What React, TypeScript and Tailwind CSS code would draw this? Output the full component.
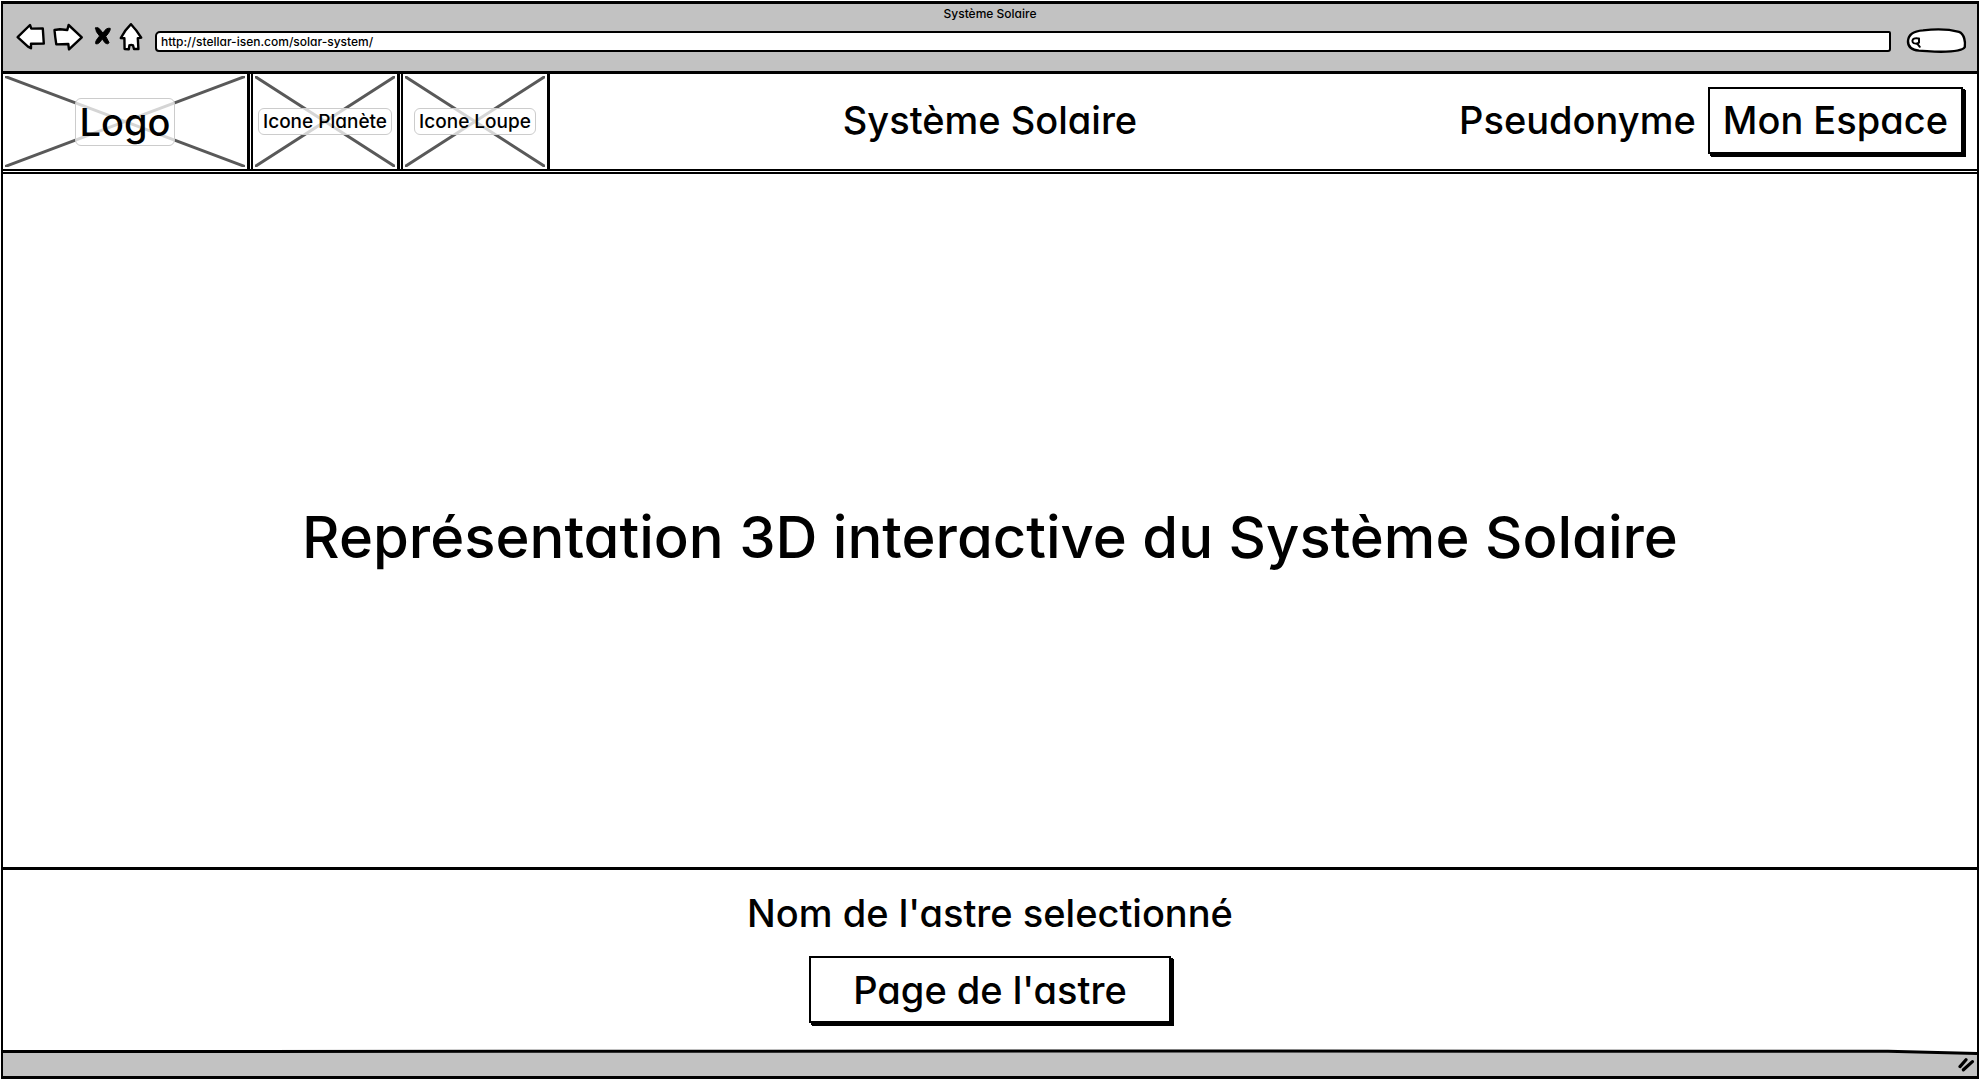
import React from "react";

type PlaceholderProps = { label: string; className: string; labelClassName: string };

function Placeholder({ label, className, labelClassName }: PlaceholderProps) {
  return (
    <a
      href="#"
      className={`relative flex items-center justify-center border-r-[3px] border-black ${className}`}
    >
      <svg
        className="absolute inset-0 h-full w-full p-[2px]"
        viewBox="0 0 100 100"
        preserveAspectRatio="none"
        aria-hidden="true"
      >
        <path
          d="M0.5 1 L99.5 99 M0.5 99 L99.5 1"
          stroke="#595959"
          strokeWidth="3"
          strokeLinecap="round"
          vectorEffect="non-scaling-stroke"
          fill="none"
        />
      </svg>
      <span
        className={`relative rounded-md border border-[#cccccc] bg-white/75 whitespace-nowrap ${labelClassName}`}
      >
        {label}
      </span>
    </a>
  );
}

type NavIconProps = { title: string; width: number; x: number; children: React.ReactNode };

function NavIcon({ title, width, x, children }: NavIconProps) {
  return (
    <button type="button" aria-label={title} className="shrink-0">
      <svg
        width={width}
        height={30}
        viewBox={`${x} 24 ${width} 30`}
        className="overflow-visible"
        fill="#fff"
        stroke="#000"
        strokeWidth="2.4"
        strokeLinejoin="round"
        strokeLinecap="round"
      >
        {children}
      </svg>
    </button>
  );
}

const sketchButton =
  "border-2 border-black bg-white h-[67px] text-[38px] leading-none shadow-[2px_2px_0_#000,3px_3px_0_#000] whitespace-nowrap";

function BrowserBar() {
  return (
    <div className="h-[70px] shrink-0 border-b-[3px] border-black bg-[#c2c2c2]">
      <div className="text-center text-xs leading-5">Système Solaire</div>
      <div className="flex items-center pr-[10px] pl-[13px]">
        <nav className="flex items-center gap-[9px]" aria-label="Navigation">
          <NavIcon title="Précédent" width={28} x={15}>
            <path d="M16.6 37.2 L29 25 L30.3 28.6 L41.8 28.5 L42.8 43.5 L30 43.8 L30 48.2 L27 46.6 Z" />
          </NavIcon>
          <NavIcon title="Suivant" width={31} x={52}>
            <path d="M53.5 30 L59 29.3 L66.3 30 L67.6 25 L80.8 37.3 L68 49.4 L67.3 44 L55.3 44.4 Q54 36 53.5 30 Z" />
          </NavIcon>
          <NavIcon title="Arrêter" width={17} x={92}>
            <path
              d="M94.6 28 Q97 26.6 98.8 29.2 L102 33.2 Q105 27.4 109.2 28.3 Q109.8 31 104.8 36.4 L108 42.6 Q107 45 103.8 42.6 L101.2 38.8 Q98 44.6 94.8 43.8 Q93.6 41.6 98.6 36 Q94.2 31.4 94.6 28 Z"
              fill="#000"
              strokeWidth="1"
            />
          </NavIcon>
          <NavIcon title="Accueil" width={24} x={118}>
            <path d="M130 24.2 Q136 30.6 140.2 37.6 L136.8 38.2 L137.4 49 L133 49 L132 45.4 Q130.2 44.4 128.4 45.4 L127.8 49.2 L123.6 49 L123.4 38.2 L119.8 38 Q124 30 130 24.2 Z" />
          </NavIcon>
        </nav>
        <input
          type="text"
          aria-label="Adresse"
          defaultValue="http://stellar-isen.com/solar-system/"
          className="mt-1 ml-3 h-[21px] min-w-0 flex-1 rounded-tl-[5px] rounded-tr-[2px] rounded-br-[3px] rounded-bl-[4px] border-2 border-black bg-white px-1 text-xs leading-4 outline-none"
        />
        <label className="relative mt-1 ml-4 h-[26px] w-[60px] shrink-0">
          <svg className="absolute inset-0 overflow-visible" width="60" height="26" viewBox="1908 28 60 26">
            <path
              d="M1909 41 C1909.5 33.5 1916 31 1924 30.4 C1935 29 1950 29.2 1960 31.8 C1965.5 34 1966.5 42 1965.8 47 C1964 50.6 1953 51.6 1942 51.8 C1932 51.8 1927 50.8 1920 50.6 C1912 49.8 1908.8 46 1909 41 Z"
              fill="#fff"
              stroke="#000"
              strokeWidth="2.4"
            />
            <path
              d="M1920 38.6 L1920 42.6 C1919 44 1914.6 44 1913.8 42.4 C1912.6 40 1914.4 38.2 1916.6 38.2 Q1918.6 38 1920 38.6 M1918 43.4 L1920.8 46.8"
              fill="none"
              stroke="#000"
              strokeWidth="2"
              strokeLinecap="round"
              strokeLinejoin="round"
            />
          </svg>
          <input
            type="search"
            aria-label="Rechercher"
            className="relative h-full w-full bg-transparent pr-2 pl-4 text-xs outline-none"
          />
        </label>
      </div>
    </div>
  );
}

export default function App() {
  return (
    <div className="flex min-h-screen bg-white p-px font-['Inter',sans-serif] font-medium text-black [font-feature-settings:'cv11']">
      <div className="flex min-w-0 flex-1 flex-col border-x-2 border-y-[3px] border-black">
        <BrowserBar />

        <header className="grid shrink-0 grid-cols-[1fr_auto_1fr] border-b-2 border-black">
          <div className="flex h-[95px]">
            <Placeholder label="Logo" className="w-[247px]" labelClassName="px-1 text-[38px] leading-[46px]" />
            <Placeholder
              label="Icone Planète"
              className="ml-px w-[149px] border-l-[2px]"
              labelClassName="px-1 text-[19px] leading-[25px]"
            />
            <Placeholder
              label="Icone Loupe"
              className="ml-px w-[149px] border-l-[2px]"
              labelClassName="px-1 text-[19px] leading-[25px]"
            />
          </div>
          <h1 className="self-center pb-[3px] text-[38px] leading-none">Système Solaire</h1>
          <div className="flex items-center justify-end gap-3 pr-[14px] pb-[3px]">
            <span className="text-[38px] leading-none">Pseudonyme</span>
            <button type="button" className={`${sketchButton} px-[13px]`}>
              Mon Espace
            </button>
          </div>
        </header>

        <main className="mt-px flex flex-1 items-center justify-center border-t-2 border-black pt-8">
          <h2 className="text-[58px] leading-none">Représentation 3D interactive du Système Solaire</h2>
        </main>

        <section className="flex shrink-0 flex-col items-center border-t-[3px] border-black pt-6 pb-7">
          <p className="text-[38px] leading-[38px]">Nom de l'astre selectionné</p>
          <button type="button" className={`${sketchButton} mt-6 w-[362px]`}>
            Page de l'astre
          </button>
        </section>

        <footer className="relative flex h-[25px] shrink-0 items-center justify-end bg-[#c2c2c2] pr-[2px]">
          <svg
            className="absolute inset-x-0 top-0 h-[5px] w-full overflow-visible"
            viewBox="0 0 1974 5"
            preserveAspectRatio="none"
            aria-hidden="true"
          >
            <path d="M0 0 L1840 0 L1974 2 L1974 0 Z" fill="#fff" />
            <path
              d="M0 0.5 L1100 0 L1885 0.3 L1974 2.5"
              fill="none"
              stroke="#000"
              strokeWidth="3"
              vectorEffect="non-scaling-stroke"
            />
          </svg>
          <svg width="17" height="14" viewBox="0 0 17 14" className="mt-[2px]" aria-hidden="true">
            <path d="M2 8.6 L8 1.8 M5.4 11.8 L14.4 3.6" stroke="#000" strokeWidth="3.2" strokeLinecap="round" />
          </svg>
        </footer>
      </div>
    </div>
  );
}
